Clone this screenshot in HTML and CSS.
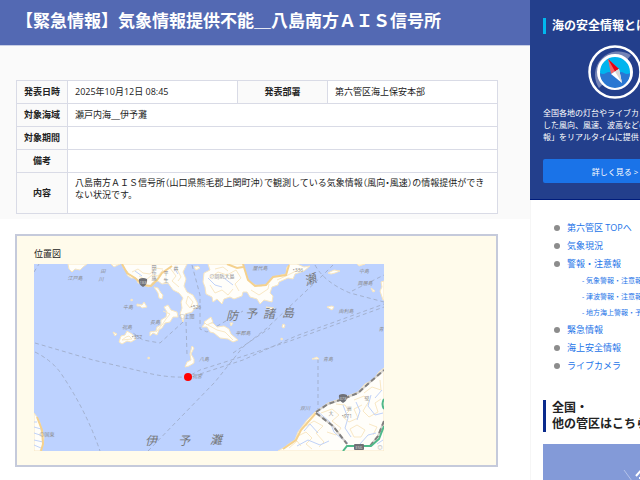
FILE: index.html
```
<!DOCTYPE html>
<html lang="ja">
<head>
    <meta charset="UTF-8">
    <meta name="viewport" content="width=device-width, initial-scale=1.0">
    <title>【緊急情報】気象情報提供不能</title>
    <link rel="stylesheet" href="styles.css">
</head>
<body>
    <div class="container">
        <main class="main">
            <section class="notice">
                <h1>【緊急情報】気象情報提供不能＿八島南方ＡＩＳ信号所</h1>

                <table class="info-table">
                    <colgroup>
                        <col class="col-label">
                        <col class="col-date">
                        <col class="col-dept">
                        <col>
                    </colgroup>
                    <tr>
                        <th scope="row">発表日時</th>
                        <td>2025年10月12日 08:45</td>
                        <th scope="row">発表部署</th>
                        <td>第六管区海上保安本部</td>
                    </tr>
                    <tr>
                        <th scope="row">対象海域</th>
                        <td colspan="3">瀬戸内海＿伊予灘</td>
                    </tr>
                    <tr>
                        <th scope="row">対象期間</th>
                        <td colspan="3"></td>
                    </tr>
                    <tr>
                        <th scope="row">備考</th>
                        <td colspan="3"></td>
                    </tr>
                    <tr class="row-content">
                        <th scope="row">内容</th>
                        <td colspan="3">八島南方ＡＩＳ信号所（山口県熊毛郡上関町沖）で観測している気象情報（風向・風速）の情報提供ができ<br>ない状況です。</td>
                    </tr>
                </table>
            </section>

            <!-- Location map -->
            <section class="map-box">
                <h2>位置図</h2>
                <svg class="map" viewBox="0 0 350 187" role="img" aria-label="位置図">
                    <rect class="sea" width="350" height="187"/>

                    <!-- Ferry routes -->
                    <g class="route">
                        <path d="M1 79L59 96L106 107Q130 114 153 113L166 106L213 91L256 77L350 43"/>
                        <path d="M1 88Q17 96 26 108Q52 146 66 187"/>
                        <path d="M114 187L146 154L181 118L209 83L233 64L289 11L299 1"/>
                        <path d="M166 110L209 96L262 72L350 40"/>
                        <path d="M284 95V147"/>
                        <path d="M281 1Q290 18 316 29L350 38M318 27L350 11"/>
                        <path d="M149 58L126 79L109 76L99 69"/>
                        <path d="M152 58L153 91M158 1L166 31L166 65L173 68L209 47"/>
                        <path d="M0 8L5 0M199 89L236 64"/>
                    </g>

                    <!-- Land -->
                    <g class="land">
                        <path d="M34 0L35 5L38 8L41 5L46 6L49 3L53 0Z"/>
                        <path d="M77 0L80 3L84 1L86 0ZM88 0L90 5L94 8L93 11L97 14L102 14L104 19L110 21L115 23L119 18L124 17L128 20L134 19L139 26L145 29L149 34L147 38L148 44L146 50L149 58L151 50L158 48L160 45L164 43L163 38L159 31L153 28L150 22L152 15L149 8L153 0Z"/>
                        <path d="M130 43L134 41L137 46L143 48L144 53L139 53L136 58L131 59L128 64L125 66L123 71L119 69L116 72L116 68L122 67L123 63L127 61L127 56L132 53L133 48Z"/>
                        <path d="M120 23L124 24L127 29L129 31L128 35L125 34L124 29ZM103 40L108 41L110 38L113 43L108 44L106 42L103 42ZM97 35L99 36L97 37Z"/>
                        <path d="M85 78L87 72L91 71L93 67L98 70L102 75L97 78L93 77L88 80ZM79 68L83 70L81 72Z"/>
                        <path d="M174 0L176 6L170 9L169 18L171 23L172 30L178 33L179 38L183 35L188 40L190 35L196 33L200 35L208 32L209 28L213 28L216 33L223 35L226 40L230 36L238 38L239 32L236 29L238 23L244 21L245 18L254 14L259 15L261 10L270 7L276 2L270 3L263 0L256 0L253 3L252 10L239 13L233 20L227 22L221 21L214 16L209 0Z"/>
                        <path d="M160 3L164 2L166 4L162 6ZM168 63L171 59L179 59L183 63L190 62L195 65L197 70L204 76L199 78L194 75L186 74L180 69L176 68L173 63Z"/>
                        <path d="M294 9L300 6L306 7L301 9L297 10ZM293 43L298 42L300 43L298 46ZM249 60L251 61L250 64L248 63ZM247 74L249 75L247 76ZM337 24L341 27L339 28ZM323 0L331 0L325 2Z"/>
                        <path d="M350 17L347 18L348 23L346 27L349 36L350 36ZM196 59L199 59L197 62ZM232 43L240 44L237 46ZM170 58L177 53L179 58L173 61Z"/>
                        <path d="M158 82L160 84L157 90L160 95L160 99L155 102L151 103L153 98L157 96L156 90ZM278 95L283 93L285 95ZM114 93L116 94L114 95Z"/>
                        <path d="M244 187L251 183L256 179L261 176L264 168L273 156L281 148L294 139L309 134L324 128L331 120L339 116L345 108L350 104V187Z"/>
                        <path d="M0 149L3 153L6 159L7 167L10 173L9 181L6 187H0Z"/>
                    </g>

                    <!-- Contours and rivers -->
                    <g class="contour">
                        <path d="M98 8L104 5L109 9L116 10L121 4L129 5M105 12L112 16L118 11L124 12L129 6M136 4L142 12L138 17L145 23M142 3L147 13L144 17M154 32L159 38L156 44L152 39ZM88 76L92 73L95 72L98 75ZM129 47L136 50L132 55L128 61L122 68"/>
                        <path d="M176 14L184 8L193 11L202 6L207 14L201 20L205 27M176 21L181 29L188 26L194 31L199 25M181 5L189 3L194 7M217 26L225 31L234 25L235 20M243 16L254 11L266 5M174 61L183 66L191 68L199 76"/>
                        <path d="M255 184L263 177L267 182M264 172L272 168L278 174L272 180L278 185M272 162L280 157L289 162L282 169L290 178L285 183M287 149L298 145L305 151L298 157L307 164L302 171L293 168M302 140L311 141L315 147L309 153L315 158L324 154L320 145L328 141M320 136L330 132L335 137L329 147L335 153L344 148L341 139L347 135M316 165L323 161L331 166L327 173L320 173ZM335 160L343 163L339 171M330 129L338 123L347 126L346 116"/>
                    </g>
                    <g class="river">
                        <path d="M3 158H0M7 165L0 163M9 172L0 169M9 178L0 176M7 184L0 181M174 14L181 21L188 23M190 14L199 21M283 147L296 158L300 168L309 176M263 182L274 176L286 181L295 177M309 141L314 154L311 164L317 173M322 138L326 147L323 156M337 131L334 142L341 151L349 149M314 179L305 171M326 180L334 171L342 169M101 7L108 12M140 4L144 10M348 126L341 134M270 167L276 160L284 169M343 180L349 176"/>
                    </g>

                    <!-- Roads and railway -->
                    <g class="road">
                        <path d="M88 0L93 9L101 14L109 21L117 22L123 16L128 9L138 2"/>
                        <path d="M209 0L214 16L221 22L232 21L239 13L252 11L255 1M193 0L203 4L209 3"/>
                        <path d="M249 185L262 176L267 166L282 149M3 153L8 166L9 180L7 187"/>
                    </g>
                    <path class="coast-road" d="M282 148L294 140L309 135L324 129L335 119L350 106M282 149L299 162L313 180M336 182L344 172L350 157"/>
                    <path class="railway" d="M282 148L294 140L309 135L324 129L335 119L350 106M282 149L299 162L313 180M336 182L344 172L350 157"/>
                    <path class="highway" d="M309 187L313 182H337L345 175L350 162M350 135Q347 140 350 145"/>

                    <g class="badge">
                        <path d="M105 15Q109 13 113 15Q114 20 109 23Q104 20 105 15Z"/>
                        <path d="M305 131Q309 129 313 131Q314 136 309 139Q304 136 305 131Z"/>
                        <rect x="320" y="180" width="10" height="6" rx="1"/>
                    </g>
                    <g class="badge-text">
                        <text x="109" y="20">188</text>
                        <text x="309" y="136">378</text>
                        <text x="325" y="185">E56</text>
                    </g>

                    <!-- Place names -->
                    <g class="island-name">
                        <text x="41" y="16">江戸島</text>
                        <text x="94" y="45">牛島</text>
                        <text x="93" y="65">祝島</text>
                        <text x="121" y="60">長島</text>
                        <text x="69" y="9">田</text>
                        <text x="67" y="17">川</text>
                        <text x="226" y="6">屋代島</text>
                        <text x="330" y="9">中島</text>
                        <text x="331" y="21">興居島</text>
                        <text x="312" y="49">由利島</text>
                        <text x="209" y="71">平郡島</text>
                        <text x="347" y="67">青</text>
                        <text x="170" y="97">八島</text>
                        <text x="163" y="114">祝宮</text>
                        <text x="294" y="97">青島</text>
                        <text x="271" y="146">双川</text>
                    </g>
                    <g class="town-name">
                        <text x="120" y="5">田</text>
                        <text x="120" y="10">布</text>
                        <text x="120" y="16">施</text>
                        <text x="132" y="11">平</text>
                        <text x="132" y="18">生</text>
                        <text x="142" y="6">井</text>
                        <text x="153" y="54">○上関</text>
                        <text x="162" y="45">•526</text>
                        <text x="103" y="75">•357</text>
                        <text x="188" y="14">◎周防大島</text>
                        <text x="264" y="8">•336</text>
                        <text x="313" y="154">•971</text>
                        <text x="297" y="151">大</text>
                        <text x="315" y="146">洲</text>
                        <text x="333" y="136">壁</text>
                        <text x="13" y="172">◎国東</text>
                        <text x="346" y="185">◎</text>
                    </g>
                    <g class="sea-name">
                        <text x="198" y="56">防</text>
                        <text x="217" y="54">予</text>
                        <text x="235" y="54">諸</text>
                        <text x="254" y="53">島</text>
                        <text x="276" y="20" transform="rotate(-20 276 15)">瀬</text>
                        <text x="117" y="181">伊</text>
                        <text x="150" y="181">予</text>
                        <text x="182" y="180">灘</text>
                    </g>

                    <circle class="marker" cx="154" cy="113" r="4"/>
                </svg>
            </section>
        </main>

        <aside class="sidebar">
            <section class="about">
                <h2>海の安全情報とは</h2>
                <svg class="compass" viewBox="0 0 54 54" aria-hidden="true">
                    <circle cx="27" cy="27" r="25.5" fill="#233f8c" stroke="#fff" stroke-width="2.5"/>
                    <path d="M11 43A23.5 23.5 0 0 1 43 10L38 16A16 16 0 0 0 16 38Z" fill="#7483b5"/>
                    <circle cx="27" cy="27" r="16.5" fill="#00b4ee" stroke="#fff" stroke-width="3"/>
                    <path d="M12 28Q15 30 18 28Q21 26 24 28Q27 30 30 28Q33 26 36 28Q39 30 42 28A15 15 0 0 1 12 28Z" fill="#2977d2"/>
                    <path d="M20 14L31 24L23 29Z" fill="#f0666a"/>
                    <path d="M20 14L31 24L27 26.5Z" fill="#e60012"/>
                    <path d="M34 38L23 29L31 24Z" fill="#fff"/>
                    <path d="M34 38L31 24L27 26.5Z" fill="#d6d6d6"/>
                </svg>
                <p>全国各地の灯台やライブカメラで観測<br>した風向、風速、波高などの「気象情<br>報」をリアルタイムに提供します。</p>
                <button type="button">詳しく見る &gt;</button>
            </section>

            <nav class="side-nav">
                <ul>
                    <li><a href="#">第六管区 TOPへ</a></li>
                    <li><a href="#">気象現況</a></li>
                    <li><a href="#">警報・注意報</a>
                        <ul>
                            <li><a href="#">- 気象警報・注意報</a></li>
                            <li><a href="#">- 津波警報・注意報</a></li>
                            <li><a href="#">- 地方海上警報・予報</a></li>
                        </ul>
                    </li>
                    <li><a href="#">緊急情報</a></li>
                    <li><a href="#">海上安全情報</a></li>
                    <li><a href="#">ライブカメラ</a></li>
                </ul>
            </nav>

            <section class="regions">
                <h2>全国・<br>他の管区はこちら</h2>
                <a href="#" class="banner" aria-label="他の管区">
                    <svg viewBox="0 0 144 60" aria-hidden="true">
                        <path d="M81 26L89 37" fill="none" stroke="#b5c3ea"/>
                        <path d="M93 32L100 24L107 32M96 34H104M100 30V39" fill="none" stroke="#fff" stroke-width="2"/>
                    </svg>
                </a>
            </section>
        </aside>
    </div>
</body>
</html>
```

FILE: styles.css
```
* {
    box-sizing: border-box;
}

body {
    margin: 0;
    font-family: 'Open Sans', 'Noto Sans CJK JP', sans-serif;
    font-size: 9px;
    line-height: 12px;
    color: #222;
    background: #fff;
    overflow-x: hidden;
}

h1, h2, p, ul {
    margin: 0;
    padding: 0;
}

a {
    color: #1a73e8;
    text-decoration: none;
}

.container {
    display: flex;
    margin-right: -60px;
    height: 100vh;
    overflow: hidden;
}

.main {
    flex: 1;
    min-width: 0;
}

.notice {
    background: #fafafa;
    padding-bottom: 5px;
}

h1 {
    padding: 8px 16px 12px;
    font-size: 17px;
    line-height: 25px;
    color: #fff;
    background: #5369b3;
    border-bottom: 1px solid #c8cee4;
    white-space: nowrap;
}

/* Notice table */
.info-table {
    width: calc(100% - 48px);
    margin: 34px 32px 0 16px;
    border-collapse: collapse;
    table-layout: fixed;
}

.col-label {
    width: 51px;
}

.col-date {
    width: 170px;
}

.col-dept {
    width: 90px;
}

.info-table th,
.info-table td {
    height: 23px;
    padding: 0 7px;
    border: 1px solid #d9dbe6;
    text-align: left;
}

.info-table th {
    padding: 0;
    text-align: center;
    background: #fafafa;
}

.info-table td {
    background: #fff;
    font-feature-settings: 'halt';
}

.info-table .row-content td {
    height: 41px;
    padding: 4px 7px;
    vertical-align: top;
    white-space: nowrap;
}

/* Map */
.map-box {
    margin: 15px 32px 0 15px;
    padding: 12px 17px 14px;
    background: #fffbeb;
    border: 2px solid #c5cadb;
}

.map-box h2 {
    font-size: 9px;
    font-weight: normal;
    line-height: 12px;
    margin-bottom: 4px;
}

.map {
    display: block;
    width: 100%;
    max-width: 350px;
}

.sea {
    fill: #bdd2ff;
}

.land {
    fill: #fffefa;
    stroke: #f8e6c0;
    stroke-width: 1;
}

.route,
.contour,
.river,
.road,
.railway,
.coast-road,
.highway {
    fill: none;
}

.route {
    stroke: #a3b1cf;
    stroke-dasharray: 4 3;
}

.contour {
    stroke: #f9e8c5;
}

.river {
    stroke: #c0d2f8;
}

.road {
    stroke: #f4d18e;
    stroke-width: 2;
}

.coast-road {
    stroke: #d5d2cf;
    stroke-width: 2;
}

.railway {
    stroke: #82807f;
    stroke-width: 2;
    stroke-dasharray: 5 3;
}

.highway {
    stroke: #4fb98a;
    stroke-width: 2;
}

.badge {
    fill: #6f7076;
}

.badge-text {
    font-size: 4px;
    fill: #ddd;
    text-anchor: middle;
}

.island-name,
.town-name {
    font-size: 5px;
    fill: #8b8b8d;
    text-anchor: middle;
}

.island-name,
.sea-name {
    font-style: italic;
}

.sea-name {
    font-size: 12px;
    fill: #77797c;
    text-anchor: middle;
}

.marker {
    fill: #f00;
}

/* Sidebar */
.sidebar {
    width: 170px;
    flex-shrink: 0;
    border-left: 1px solid #f6f6f6;
}

.sidebar h2 {
    font-size: 12px;
    line-height: 16px;
    padding-left: 6px;
    border-left: 3px solid #0a2a8c;
    white-space: nowrap;
}

.about {
    margin-left: -1px;
    padding: 18px 13px 16px;
    color: #fff;
    background: #233f8c;
    border-bottom: 1px solid #001c7b;
}

.about h2 {
    border-left-color: #00b7ee;
}

.compass {
    display: block;
    width: 54px;
    margin: 11px auto 8px;
}

.about p {
    font-size: 8px;
    white-space: nowrap;
}

.about button {
    display: block;
    width: 100%;
    height: 24px;
    margin-top: 16px;
    padding: 0;
    border: none;
    border-radius: 2px;
    font-family: inherit;
    font-size: 8px;
    color: #fff;
    background: #1a73e8;
    cursor: pointer;
}

.side-nav {
    padding: 19px 0 0 23px;
}

.side-nav ul {
    list-style: none;
}

.side-nav li {
    position: relative;
    padding-left: 13px;
    line-height: 18px;
    white-space: nowrap;
}

.side-nav li::before {
    content: '';
    position: absolute;
    left: 0;
    top: 6px;
    width: 6px;
    height: 6px;
    border-radius: 50%;
    background: #8c8c8c;
}

.side-nav li li {
    padding-left: 15px;
    font-size: 7px;
    line-height: 16px;
}

.side-nav li li::before {
    display: none;
}

.regions {
    padding: 25px 13px 0 12px;
}

.banner {
    display: block;
    margin-top: 12px;
    background: #839ad8;
}

.banner svg {
    display: block;
    width: 100%;
}
```
